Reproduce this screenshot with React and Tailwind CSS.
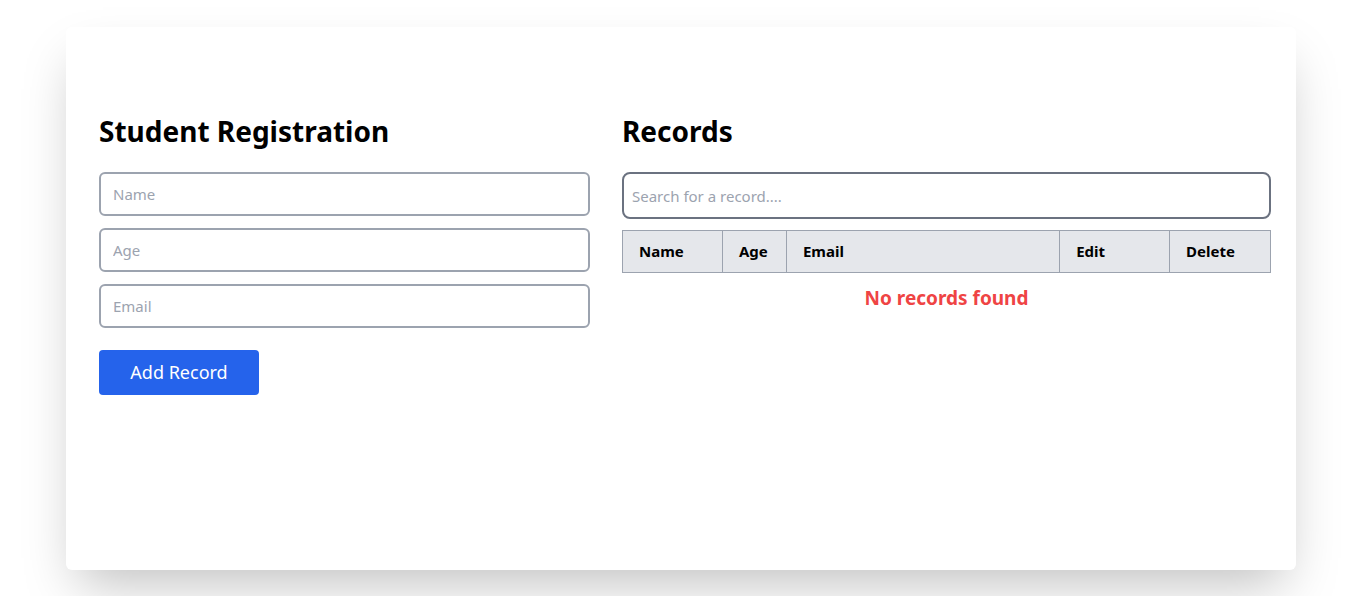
export default function App() {
  return (
    <div className="min-h-[596px] bg-white pt-[27px] px-[66px]" style={{ fontFamily: '"Noto Sans", "Open Sans", sans-serif' }}>
      <div className="bg-white rounded-md shadow-2xl h-[543px] w-[1230px] pl-[33px] pr-[25px] pt-[88px]">
        <div className="flex gap-[32px]">
          <div className="w-[491px] flex flex-col">
            <h1 className="text-[28px] leading-[36px] font-bold text-black mb-[23px] -mt-[2px]">Student Registration</h1>
            <div className="flex flex-col gap-[12px]">
              <input placeholder="Name" className="h-[44px] border-2 border-[#9ca3af] rounded-md px-[12px] text-[15px] placeholder:text-[#9ca3af] outline-none" />
              <input placeholder="Age" className="h-[44px] border-2 border-[#9ca3af] rounded-md px-[12px] text-[15px] placeholder:text-[#9ca3af] outline-none" />
              <input placeholder="Email" className="h-[44px] border-2 border-[#9ca3af] rounded-md px-[12px] text-[15px] placeholder:text-[#9ca3af] outline-none" />
            </div>
            <button className="mt-[22px] w-[160px] h-[45px] bg-[#2563eb] text-white text-[18px] rounded-[4px]">Add Record</button>
          </div>
          <div className="w-[649px] flex flex-col">
            <h2 className="text-[28px] leading-[36px] font-bold text-black mb-[23px] -mt-[2px]">Records</h2>
            <input placeholder="Search for a record...." className="h-[47px] border-2 border-[#6b7280] rounded-lg px-[8px] text-[15px] placeholder:text-[#9ca3af] outline-none" />
            <table className="mt-[11px] w-full border-collapse">
              <thead>
                <tr className="bg-[#e5e7eb] h-[42px]">
                  <th className="w-[100px] border border-[#9ca3af] text-left px-[16px] py-0 text-[15px] font-bold">Name</th>
                  <th className="w-[64px] border border-[#9ca3af] text-left px-[16px] py-0 text-[15px] font-bold">Age</th>
                  <th className="w-[274px] border border-[#9ca3af] text-left px-[16px] py-0 text-[15px] font-bold">Email</th>
                  <th className="w-[110px] border border-[#9ca3af] text-left px-[16px] py-0 text-[15px] font-bold">Edit</th>
                  <th className="w-[101px] border border-[#9ca3af] text-left px-[16px] py-0 text-[15px] font-bold">Delete</th>
                </tr>
              </thead>
              <tbody>
                <tr>
                  <td colSpan={5} className="text-center text-[#ef4444] font-bold text-[19px] pt-[11px]">No records found</td>
                </tr>
              </tbody>
            </table>
          </div>
        </div>
      </div>
    </div>
  );
}
